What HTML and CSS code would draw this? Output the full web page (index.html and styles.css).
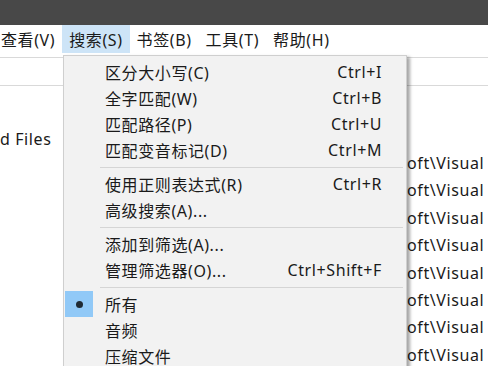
FILE: index.html
```html
<!DOCTYPE html>
<html lang="zh-CN">
<head>
  <meta charset="UTF-8" />
  <meta name="viewport" content="width=device-width, initial-scale=1.0"/>
  <title>Everything - 搜索菜单</title>
  <link rel="stylesheet" href="styles.css">
</head>
<body>

  <div class="titlebar"></div>

  <div class="menubar">
    <span class="menu first">查看(V)</span>
    <span class="menu open">搜索(S)</span>
    <span class="menu">书签(B)</span>
    <span class="menu">工具(T)</span>
    <span class="menu">帮助(H)</span>
  </div>

  <div class="searchbar"></div>

  <div class="content">
    <div class="side">
      <div class="side-item">d Files</div>
    </div>
    <div class="list">
      <div class="row">oft\Visual</div>
      <div class="row">oft\Visual</div>
      <div class="row">oft\Visual</div>
      <div class="row">oft\Visual</div>
      <div class="row">oft\Visual</div>
      <div class="row">oft\Visual</div>
      <div class="row">oft\Visual</div>
      <div class="row">oft\Visual</div>
    </div>
  </div>

  <div class="dropdown">
    <div class="item"><span>区分大小写(C)</span><span class="key">Ctrl+I</span></div>
    <div class="item"><span>全字匹配(W)</span><span class="key">Ctrl+B</span></div>
    <div class="item"><span>匹配路径(P)</span><span class="key">Ctrl+U</span></div>
    <div class="item"><span>匹配变音标记(D)</span><span class="key">Ctrl+M</span></div>
    <div class="sep"></div>
    <div class="item"><span>使用正则表达式(R)</span><span class="key">Ctrl+R</span></div>
    <div class="item"><span>高级搜索(A)...</span></div>
    <div class="sep"></div>
    <div class="item"><span>添加到筛选(A)...</span></div>
    <div class="item"><span>管理筛选器(O)...</span><span class="key">Ctrl+Shift+F</span></div>
    <div class="sep"></div>
    <div class="item checked"><span class="check"><span class="dot"></span></span><span>所有</span></div>
    <div class="item"><span>音频</span></div>
    <div class="item"><span>压缩文件</span></div>
  </div>

</body>
</html>
```

FILE: styles.css
```css
body {
  margin: 0;
  background: #fff;
  font-family: "Noto Sans", "Noto Sans CJK SC", sans-serif;
  font-size: 16px;
  letter-spacing: 0.6px;
  color: #1a1a1a;
  overflow: hidden;
  height: 366px;
}
.titlebar {
  height: 25px;
  background: #484848;
}
.menubar {
  display: flex;
  height: 28px;
  align-items: stretch;
}
.menu {
  display: flex;
  align-items: center;
  padding: 0 7px;
}
.menu.first {
  padding-left: 1px;
}
.menu.open {
  background: #cde4f7;
}
.searchbar {
  height: 27px;
  border-top: 1px solid #d9d9d9;
  border-bottom: 1px solid #d9d9d9;
  margin-top: 4px;
}
.content {
  display: flex;
}
.side {
  flex-shrink: 0;
  width: 100px;
  padding-top: 40px;
}
.side-item {
  height: 26px;
  line-height: 26px;
}
.list {
  flex: 1;
  min-width: 0;
  overflow: hidden;
  padding-left: 307px;
  padding-top: 64px;
  white-space: nowrap;
}
.row {
  height: 27.4px;
  line-height: 27.4px;
}
.dropdown {
  position: absolute;
  left: 63px;
  top: 55px;
  width: 342px;
  height: 330px;
  padding-top: 3px;
  background: #f2f2f2;
  border: 1px solid #cfcfcf;
  box-shadow: 3px 2px 3px rgba(0, 0, 0, 0.35);
}
.item {
  position: relative;
  display: flex;
  justify-content: space-between;
  align-items: center;
  height: 26px;
  padding-left: 41px;
  padding-right: 24px;
}
.sep {
  height: 1px;
  margin: 4px 3px 3px 36px;
  background: #d5d5d5;
}
.check {
  position: absolute;
  left: 1px;
  top: 0;
  width: 28px;
  height: 26px;
  background: #91c9f7;
  display: flex;
  align-items: center;
  justify-content: center;
}
.dot {
  width: 7px;
  height: 7px;
  border-radius: 50%;
  background: #1f2a33;
}
```
